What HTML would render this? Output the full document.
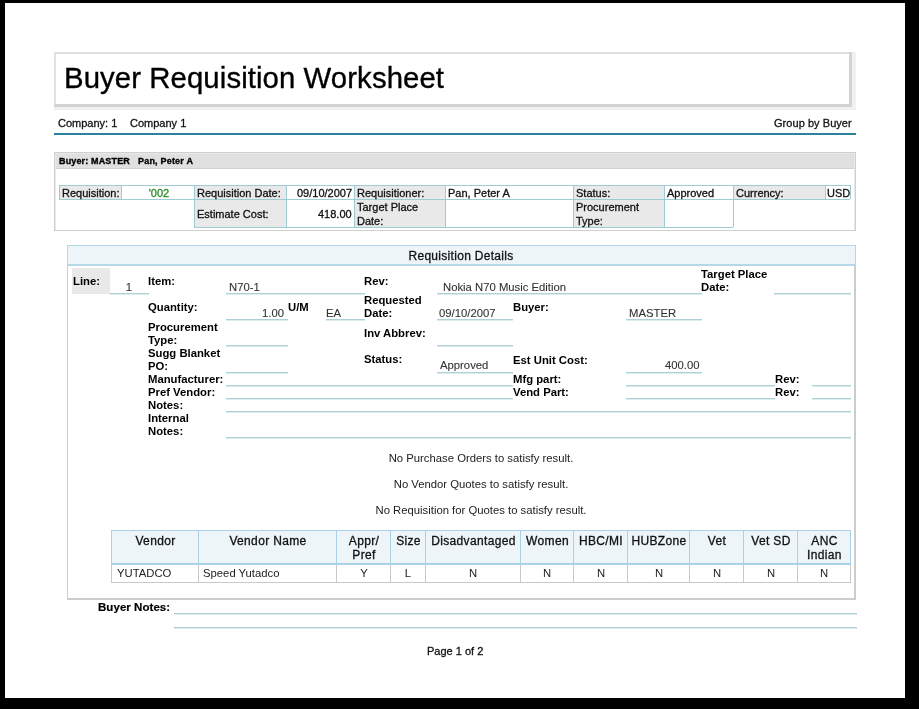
<!DOCTYPE html>
<html><head><meta charset="utf-8"><title>Buyer Requisition Worksheet</title>
<style>
html,body{margin:0;padding:0;}
body{width:919px;height:709px;background:#000;position:relative;overflow:hidden;font-family:"Liberation Sans",sans-serif;}
body>div{position:absolute;}
.g{will-change:transform;}
</style></head><body>
<div style="left:5px;top:3px;width:900px;height:695px;background:#fff;"></div>
<div style="left:54px;top:52px;width:802px;height:58px;background:#f1f1f1;"></div>
<div style="left:54px;top:52px;width:798px;height:55px;background:#d3d3d3;"></div>
<div style="left:54px;top:52px;width:795px;height:52px;background:#e1e1e1;"></div>
<div style="left:56px;top:54px;width:793px;height:50px;background:#fff;"></div>
<div class="g" style="top:58px;font:normal 29.33px/40px 'Liberation Sans',sans-serif;color:#000;white-space:nowrap;letter-spacing:0.09px;-webkit-text-stroke:0.35px #000;left:64px;">Buyer Requisition Worksheet</div>
<div class="g" style="top:113px;font:normal 11px/20px 'Liberation Sans',sans-serif;color:#111;white-space:nowrap;-webkit-text-stroke:0.3px #111;left:58px;">Company: 1</div>
<div class="g" style="top:113px;font:normal 11px/20px 'Liberation Sans',sans-serif;color:#111;white-space:nowrap;-webkit-text-stroke:0.3px #111;left:129.5px;">Company 1</div>
<div class="g" style="top:113px;font:normal 11px/20px 'Liberation Sans',sans-serif;color:#111;white-space:nowrap;letter-spacing:0.05px;-webkit-text-stroke:0.3px #111;right:67.5px;text-align:right;">Group by Buyer</div>
<div style="left:54px;top:133px;width:802px;height:2px;background:#2b819e;"></div>
<div style="left:54px;top:152px;width:802px;height:79px;background:#cfcfcf;"></div>
<div style="left:55px;top:153px;width:800px;height:77px;background:#e9e9e9;"></div>
<div style="left:56px;top:154px;width:798px;height:76px;background:#fff;"></div>
<div style="left:56px;top:154px;width:798px;height:15px;background:#e0e0e0;"></div>
<div style="left:56px;top:168px;width:798px;height:1px;background:#d2d2d2;"></div>
<div class="g" style="top:151px;font:bold 9px/20px 'Liberation Sans',sans-serif;color:#000;white-space:nowrap;letter-spacing:0.15px;-webkit-text-stroke:0.35px #000;left:59.3px;">Buyer: MASTER</div>
<div class="g" style="top:151px;font:bold 9px/20px 'Liberation Sans',sans-serif;color:#000;white-space:nowrap;letter-spacing:0.2px;-webkit-text-stroke:0.35px #000;left:137.5px;">Pan, Peter A</div>
<div style="left:59px;top:185px;width:62px;height:14px;background:#e9e9e9;"></div>
<div style="left:194px;top:185px;width:92px;height:14px;background:#e9e9e9;"></div>
<div style="left:354px;top:185px;width:91px;height:14px;background:#e9e9e9;"></div>
<div style="left:573px;top:185px;width:91px;height:14px;background:#e9e9e9;"></div>
<div style="left:733px;top:185px;width:92px;height:14px;background:#e9e9e9;"></div>
<div style="left:194px;top:199px;width:92px;height:28px;background:#e9e9e9;"></div>
<div style="left:354px;top:199px;width:91px;height:28px;background:#e9e9e9;"></div>
<div style="left:573px;top:199px;width:91px;height:28px;background:#e9e9e9;"></div>
<div style="left:59px;top:185px;width:791px;height:1px;background:#9fcbd5;"></div>
<div style="left:59px;top:199px;width:791px;height:1px;background:#9fcbd5;"></div>
<div style="left:194px;top:227px;width:539px;height:1px;background:#9fcbd5;"></div>
<div style="left:59px;top:185px;width:1px;height:14px;background:#9fcbd5;"></div>
<div style="left:121px;top:185px;width:1px;height:14px;background:#9fcbd5;"></div>
<div style="left:194px;top:185px;width:1px;height:14px;background:#9fcbd5;"></div>
<div style="left:286px;top:185px;width:1px;height:14px;background:#9fcbd5;"></div>
<div style="left:354px;top:185px;width:1px;height:14px;background:#9fcbd5;"></div>
<div style="left:445px;top:185px;width:1px;height:14px;background:#9fcbd5;"></div>
<div style="left:573px;top:185px;width:1px;height:14px;background:#9fcbd5;"></div>
<div style="left:664px;top:185px;width:1px;height:14px;background:#9fcbd5;"></div>
<div style="left:733px;top:185px;width:1px;height:14px;background:#9fcbd5;"></div>
<div style="left:825px;top:185px;width:1px;height:14px;background:#9fcbd5;"></div>
<div style="left:850px;top:185px;width:1px;height:14px;background:#9fcbd5;"></div>
<div style="left:194px;top:199px;width:1px;height:28px;background:#9fcbd5;"></div>
<div style="left:286px;top:199px;width:1px;height:28px;background:#9fcbd5;"></div>
<div style="left:354px;top:199px;width:1px;height:28px;background:#9fcbd5;"></div>
<div style="left:445px;top:199px;width:1px;height:28px;background:#9fcbd5;"></div>
<div style="left:573px;top:199px;width:1px;height:28px;background:#9fcbd5;"></div>
<div style="left:664px;top:199px;width:1px;height:28px;background:#9fcbd5;"></div>
<div style="left:733px;top:199px;width:1px;height:28px;background:#9fcbd5;"></div>
<div class="g" style="top:183px;font:normal 11px/20px 'Liberation Sans',sans-serif;color:#111;white-space:nowrap;-webkit-text-stroke:0.3px #111;left:62px;">Requisition:</div>
<div class="g" style="top:183px;font:normal 11px/20px 'Liberation Sans',sans-serif;color:#2b8c2b;white-space:nowrap;-webkit-text-stroke:0.3px #2b8c2b;left:123.5px;width:70px;text-align:center;">'002</div>
<div class="g" style="top:183px;font:normal 11px/20px 'Liberation Sans',sans-serif;color:#111;white-space:nowrap;-webkit-text-stroke:0.3px #111;left:196.5px;">Requisition Date:</div>
<div class="g" style="top:183px;font:normal 11px/20px 'Liberation Sans',sans-serif;color:#111;white-space:nowrap;-webkit-text-stroke:0.3px #111;right:567px;text-align:right;">09/10/2007</div>
<div class="g" style="top:183px;font:normal 11px/20px 'Liberation Sans',sans-serif;color:#111;white-space:nowrap;-webkit-text-stroke:0.3px #111;left:356.5px;">Requisitioner:</div>
<div class="g" style="top:183px;font:normal 11px/20px 'Liberation Sans',sans-serif;color:#111;white-space:nowrap;-webkit-text-stroke:0.3px #111;left:447.5px;">Pan, Peter A</div>
<div class="g" style="top:183px;font:normal 11px/20px 'Liberation Sans',sans-serif;color:#111;white-space:nowrap;-webkit-text-stroke:0.3px #111;left:575.5px;">Status:</div>
<div class="g" style="top:183px;font:normal 11px/20px 'Liberation Sans',sans-serif;color:#111;white-space:nowrap;-webkit-text-stroke:0.3px #111;left:666.5px;">Approved</div>
<div class="g" style="top:183px;font:normal 11px/20px 'Liberation Sans',sans-serif;color:#111;white-space:nowrap;-webkit-text-stroke:0.3px #111;left:735.5px;">Currency:</div>
<div class="g" style="top:183px;font:normal 11px/20px 'Liberation Sans',sans-serif;color:#111;white-space:nowrap;-webkit-text-stroke:0.3px #111;right:68.5px;text-align:right;">USD</div>
<div class="g" style="top:203.5px;font:normal 11px/20px 'Liberation Sans',sans-serif;color:#111;white-space:nowrap;-webkit-text-stroke:0.3px #111;left:196.5px;">Estimate Cost:</div>
<div class="g" style="top:203.5px;font:normal 11px/20px 'Liberation Sans',sans-serif;color:#111;white-space:nowrap;-webkit-text-stroke:0.3px #111;right:567px;text-align:right;">418.00</div>
<div class="g" style="top:197px;font:normal 11px/20px 'Liberation Sans',sans-serif;color:#111;white-space:nowrap;-webkit-text-stroke:0.3px #111;left:356.5px;">Target Place</div>
<div class="g" style="top:211px;font:normal 11px/20px 'Liberation Sans',sans-serif;color:#111;white-space:nowrap;-webkit-text-stroke:0.3px #111;left:356.5px;">Date:</div>
<div class="g" style="top:197px;font:normal 11px/20px 'Liberation Sans',sans-serif;color:#111;white-space:nowrap;-webkit-text-stroke:0.3px #111;left:575.5px;">Procurement</div>
<div class="g" style="top:211px;font:normal 11px/20px 'Liberation Sans',sans-serif;color:#111;white-space:nowrap;-webkit-text-stroke:0.3px #111;left:575.5px;">Type:</div>
<div style="left:67px;top:245px;width:789px;height:355px;background:#cdcdcd;"></div>
<div style="left:68px;top:246px;width:786px;height:352px;background:#fff;"></div>
<div style="left:67px;top:245px;width:789px;height:21px;background:#b5d7e8;"></div>
<div style="left:68px;top:246px;width:787px;height:18px;background:#edf5f9;"></div>
<div class="g" style="top:246px;font:normal 12px/20px 'Liberation Sans',sans-serif;color:#111;white-space:nowrap;letter-spacing:0.3px;-webkit-text-stroke:0.3px #111;left:311.0px;width:300px;text-align:center;">Requisition Details</div>
<div style="left:72px;top:268px;width:38px;height:26px;background:#e9e9e9;"></div>
<div class="g" style="top:271px;font:bold 11.3px/20px 'Liberation Sans',sans-serif;color:#000;white-space:nowrap;left:72.8px;">Line:</div>
<div class="g" style="top:277px;font:normal 11.3px/20px 'Liberation Sans',sans-serif;color:#333;white-space:nowrap;-webkit-text-stroke:0.1px #333;left:114.0px;width:30px;text-align:center;">1</div>
<div style="left:110px;top:293px;width:39px;height:1px;background:#aed1d6;"></div>
<div style="left:110px;top:294px;width:39px;height:1px;background:#dcecee;"></div>
<div class="g" style="top:271px;font:bold 11.3px/20px 'Liberation Sans',sans-serif;color:#000;white-space:nowrap;left:148px;">Item:</div>
<div class="g" style="top:277px;font:normal 11.3px/20px 'Liberation Sans',sans-serif;color:#333;white-space:nowrap;-webkit-text-stroke:0.1px #333;left:229px;">N70-1</div>
<div style="left:226px;top:293px;width:139px;height:1px;background:#aed1d6;"></div>
<div style="left:226px;top:294px;width:139px;height:1px;background:#dcecee;"></div>
<div class="g" style="top:271px;font:bold 11.3px/20px 'Liberation Sans',sans-serif;color:#000;white-space:nowrap;left:363.5px;">Rev:</div>
<div class="g" style="top:277px;font:normal 11.3px/20px 'Liberation Sans',sans-serif;color:#333;white-space:nowrap;-webkit-text-stroke:0.1px #333;left:443px;">Nokia N70 Music Edition</div>
<div style="left:437px;top:293px;width:265px;height:1px;background:#aed1d6;"></div>
<div style="left:437px;top:294px;width:265px;height:1px;background:#dcecee;"></div>
<div class="g" style="top:263.5px;font:bold 11.3px/20px 'Liberation Sans',sans-serif;color:#000;white-space:nowrap;left:701px;">Target Place</div>
<div class="g" style="top:276.5px;font:bold 11.3px/20px 'Liberation Sans',sans-serif;color:#000;white-space:nowrap;left:701px;">Date:</div>
<div style="left:774px;top:293px;width:77px;height:1px;background:#aed1d6;"></div>
<div style="left:774px;top:294px;width:77px;height:1px;background:#dcecee;"></div>
<div class="g" style="top:297px;font:bold 11.3px/20px 'Liberation Sans',sans-serif;color:#000;white-space:nowrap;left:148px;">Quantity:</div>
<div class="g" style="top:303px;font:normal 11.3px/20px 'Liberation Sans',sans-serif;color:#333;white-space:nowrap;-webkit-text-stroke:0.1px #333;right:635.5px;text-align:right;">1.00</div>
<div style="left:226px;top:319px;width:62px;height:1px;background:#aed1d6;"></div>
<div style="left:226px;top:320px;width:62px;height:1px;background:#dcecee;"></div>
<div class="g" style="top:297px;font:bold 11.3px/20px 'Liberation Sans',sans-serif;color:#000;white-space:nowrap;left:288px;">U/M</div>
<div class="g" style="top:303px;font:normal 11.3px/20px 'Liberation Sans',sans-serif;color:#333;white-space:nowrap;-webkit-text-stroke:0.1px #333;left:325.5px;">EA</div>
<div style="left:326px;top:319px;width:39px;height:1px;background:#aed1d6;"></div>
<div style="left:326px;top:320px;width:39px;height:1px;background:#dcecee;"></div>
<div class="g" style="top:290px;font:bold 11.3px/20px 'Liberation Sans',sans-serif;color:#000;white-space:nowrap;left:363.5px;">Requested</div>
<div class="g" style="top:303px;font:bold 11.3px/20px 'Liberation Sans',sans-serif;color:#000;white-space:nowrap;left:363.5px;">Date:</div>
<div class="g" style="top:303px;font:normal 11.3px/20px 'Liberation Sans',sans-serif;color:#333;white-space:nowrap;-webkit-text-stroke:0.1px #333;left:439px;">09/10/2007</div>
<div style="left:437px;top:319px;width:76px;height:1px;background:#aed1d6;"></div>
<div style="left:437px;top:320px;width:76px;height:1px;background:#dcecee;"></div>
<div class="g" style="top:296.5px;font:bold 11.3px/20px 'Liberation Sans',sans-serif;color:#000;white-space:nowrap;left:513px;">Buyer:</div>
<div class="g" style="top:303px;font:normal 11.3px/20px 'Liberation Sans',sans-serif;color:#333;white-space:nowrap;-webkit-text-stroke:0.1px #333;left:628.5px;">MASTER</div>
<div style="left:626px;top:319px;width:76px;height:1px;background:#aed1d6;"></div>
<div style="left:626px;top:320px;width:76px;height:1px;background:#dcecee;"></div>
<div class="g" style="top:316.5px;font:bold 11.3px/20px 'Liberation Sans',sans-serif;color:#000;white-space:nowrap;left:148px;">Procurement</div>
<div class="g" style="top:329.5px;font:bold 11.3px/20px 'Liberation Sans',sans-serif;color:#000;white-space:nowrap;left:148px;">Type:</div>
<div style="left:226px;top:345px;width:62px;height:1px;background:#aed1d6;"></div>
<div style="left:226px;top:346px;width:62px;height:1px;background:#dcecee;"></div>
<div class="g" style="top:323px;font:bold 11.3px/20px 'Liberation Sans',sans-serif;color:#000;white-space:nowrap;left:363.5px;">Inv Abbrev:</div>
<div style="left:437px;top:345px;width:76px;height:1px;background:#aed1d6;"></div>
<div style="left:437px;top:346px;width:76px;height:1px;background:#dcecee;"></div>
<div class="g" style="top:342.5px;font:bold 11.3px/20px 'Liberation Sans',sans-serif;color:#000;white-space:nowrap;left:148px;">Sugg Blanket</div>
<div class="g" style="top:355.5px;font:bold 11.3px/20px 'Liberation Sans',sans-serif;color:#000;white-space:nowrap;left:148px;">PO:</div>
<div style="left:226px;top:372px;width:62px;height:1px;background:#aed1d6;"></div>
<div style="left:226px;top:373px;width:62px;height:1px;background:#dcecee;"></div>
<div class="g" style="top:349px;font:bold 11.3px/20px 'Liberation Sans',sans-serif;color:#000;white-space:nowrap;left:363.5px;">Status:</div>
<div class="g" style="top:355px;font:normal 11.3px/20px 'Liberation Sans',sans-serif;color:#333;white-space:nowrap;-webkit-text-stroke:0.1px #333;left:439.5px;">Approved</div>
<div style="left:437px;top:372px;width:76px;height:1px;background:#aed1d6;"></div>
<div style="left:437px;top:373px;width:76px;height:1px;background:#dcecee;"></div>
<div class="g" style="top:349.5px;font:bold 11.3px/20px 'Liberation Sans',sans-serif;color:#000;white-space:nowrap;left:513px;">Est Unit Cost:</div>
<div class="g" style="top:355px;font:normal 11.3px/20px 'Liberation Sans',sans-serif;color:#333;white-space:nowrap;-webkit-text-stroke:0.1px #333;right:219.5px;text-align:right;">400.00</div>
<div style="left:626px;top:372px;width:76px;height:1px;background:#aed1d6;"></div>
<div style="left:626px;top:373px;width:76px;height:1px;background:#dcecee;"></div>
<div class="g" style="top:368.5px;font:bold 11.3px/20px 'Liberation Sans',sans-serif;color:#000;white-space:nowrap;left:148px;">Manufacturer:</div>
<div style="left:226px;top:385px;width:287px;height:1px;background:#aed1d6;"></div>
<div style="left:226px;top:386px;width:287px;height:1px;background:#dcecee;"></div>
<div class="g" style="top:368.5px;font:bold 11.3px/20px 'Liberation Sans',sans-serif;color:#000;white-space:nowrap;left:513px;">Mfg part:</div>
<div style="left:626px;top:385px;width:149px;height:1px;background:#aed1d6;"></div>
<div style="left:626px;top:386px;width:149px;height:1px;background:#dcecee;"></div>
<div class="g" style="top:368.5px;font:bold 11.3px/20px 'Liberation Sans',sans-serif;color:#000;white-space:nowrap;left:775px;">Rev:</div>
<div style="left:812px;top:385px;width:39px;height:1px;background:#aed1d6;"></div>
<div style="left:812px;top:386px;width:39px;height:1px;background:#dcecee;"></div>
<div class="g" style="top:382px;font:bold 11.3px/20px 'Liberation Sans',sans-serif;color:#000;white-space:nowrap;left:148px;">Pref Vendor:</div>
<div style="left:226px;top:398px;width:287px;height:1px;background:#aed1d6;"></div>
<div style="left:226px;top:399px;width:287px;height:1px;background:#dcecee;"></div>
<div class="g" style="top:382px;font:bold 11.3px/20px 'Liberation Sans',sans-serif;color:#000;white-space:nowrap;left:513px;">Vend Part:</div>
<div style="left:626px;top:398px;width:149px;height:1px;background:#aed1d6;"></div>
<div style="left:626px;top:399px;width:149px;height:1px;background:#dcecee;"></div>
<div class="g" style="top:382px;font:bold 11.3px/20px 'Liberation Sans',sans-serif;color:#000;white-space:nowrap;left:775px;">Rev:</div>
<div style="left:812px;top:398px;width:39px;height:1px;background:#aed1d6;"></div>
<div style="left:812px;top:399px;width:39px;height:1px;background:#dcecee;"></div>
<div class="g" style="top:395px;font:bold 11.3px/20px 'Liberation Sans',sans-serif;color:#000;white-space:nowrap;left:148px;">Notes:</div>
<div style="left:226px;top:411px;width:625px;height:1px;background:#aed1d6;"></div>
<div style="left:226px;top:412px;width:625px;height:1px;background:#dcecee;"></div>
<div class="g" style="top:408px;font:bold 11.3px/20px 'Liberation Sans',sans-serif;color:#000;white-space:nowrap;left:148px;">Internal</div>
<div class="g" style="top:421px;font:bold 11.3px/20px 'Liberation Sans',sans-serif;color:#000;white-space:nowrap;left:148px;">Notes:</div>
<div style="left:226px;top:437px;width:625px;height:1px;background:#aed1d6;"></div>
<div style="left:226px;top:438px;width:625px;height:1px;background:#dcecee;"></div>
<div class="g" style="top:448px;font:normal 11.3px/20px 'Liberation Sans',sans-serif;color:#222;white-space:nowrap;left:280.5px;width:400px;text-align:center;">No Purchase Orders to satisfy result.</div>
<div class="g" style="top:473.5px;font:normal 11.3px/20px 'Liberation Sans',sans-serif;color:#222;white-space:nowrap;left:280.5px;width:400px;text-align:center;">No Vendor Quotes to satisfy result.</div>
<div class="g" style="top:499.5px;font:normal 11.3px/20px 'Liberation Sans',sans-serif;color:#222;white-space:nowrap;left:280.5px;width:400px;text-align:center;">No Requisition for Quotes to satisfy result.</div>
<div style="left:111px;top:530px;width:740px;height:34px;background:#a9d2e8;"></div>
<div style="left:112px;top:531px;width:738px;height:32px;background:#eef5f9;"></div>
<div style="left:111px;top:530px;width:1px;height:34px;background:#a9d2e8;"></div>
<div style="left:198px;top:530px;width:1px;height:34px;background:#a9d2e8;"></div>
<div style="left:336px;top:530px;width:1px;height:34px;background:#a9d2e8;"></div>
<div style="left:390px;top:530px;width:1px;height:34px;background:#a9d2e8;"></div>
<div style="left:425px;top:530px;width:1px;height:34px;background:#a9d2e8;"></div>
<div style="left:520px;top:530px;width:1px;height:34px;background:#a9d2e8;"></div>
<div style="left:573px;top:530px;width:1px;height:34px;background:#a9d2e8;"></div>
<div style="left:627px;top:530px;width:1px;height:34px;background:#a9d2e8;"></div>
<div style="left:689px;top:530px;width:1px;height:34px;background:#a9d2e8;"></div>
<div style="left:743px;top:530px;width:1px;height:34px;background:#a9d2e8;"></div>
<div style="left:797px;top:530px;width:1px;height:34px;background:#a9d2e8;"></div>
<div style="left:850px;top:530px;width:1px;height:34px;background:#a9d2e8;"></div>
<div style="left:111px;top:563px;width:740px;height:2px;background:#a9d2e8;"></div>
<div style="left:111px;top:582px;width:740px;height:1px;background:#c9c9c9;"></div>
<div style="left:111px;top:565px;width:1px;height:18px;background:#c9c9c9;"></div>
<div style="left:198px;top:565px;width:1px;height:18px;background:#c9c9c9;"></div>
<div style="left:336px;top:565px;width:1px;height:18px;background:#c9c9c9;"></div>
<div style="left:390px;top:565px;width:1px;height:18px;background:#c9c9c9;"></div>
<div style="left:425px;top:565px;width:1px;height:18px;background:#c9c9c9;"></div>
<div style="left:520px;top:565px;width:1px;height:18px;background:#c9c9c9;"></div>
<div style="left:573px;top:565px;width:1px;height:18px;background:#c9c9c9;"></div>
<div style="left:627px;top:565px;width:1px;height:18px;background:#c9c9c9;"></div>
<div style="left:689px;top:565px;width:1px;height:18px;background:#c9c9c9;"></div>
<div style="left:743px;top:565px;width:1px;height:18px;background:#c9c9c9;"></div>
<div style="left:797px;top:565px;width:1px;height:18px;background:#c9c9c9;"></div>
<div style="left:850px;top:565px;width:1px;height:18px;background:#c9c9c9;"></div>
<div class="g" style="top:531px;font:normal 12px/20px 'Liberation Sans',sans-serif;color:#111;white-space:nowrap;letter-spacing:0.35px;-webkit-text-stroke:0.3px #111;left:101.5px;width:107px;text-align:center;">Vendor</div>
<div class="g" style="top:531px;font:normal 12px/20px 'Liberation Sans',sans-serif;color:#111;white-space:nowrap;letter-spacing:0.35px;-webkit-text-stroke:0.3px #111;left:188.5px;width:158px;text-align:center;">Vendor Name</div>
<div class="g" style="top:531px;font:normal 12px/20px 'Liberation Sans',sans-serif;color:#111;white-space:nowrap;letter-spacing:0.35px;-webkit-text-stroke:0.3px #111;left:326.5px;width:74px;text-align:center;">Appr/</div>
<div class="g" style="top:544.5px;font:normal 12px/20px 'Liberation Sans',sans-serif;color:#111;white-space:nowrap;letter-spacing:0.35px;-webkit-text-stroke:0.3px #111;left:326.5px;width:74px;text-align:center;">Pref</div>
<div class="g" style="top:531px;font:normal 12px/20px 'Liberation Sans',sans-serif;color:#111;white-space:nowrap;letter-spacing:0.35px;-webkit-text-stroke:0.3px #111;left:380.5px;width:55px;text-align:center;">Size</div>
<div class="g" style="top:531px;font:normal 12px/20px 'Liberation Sans',sans-serif;color:#111;white-space:nowrap;letter-spacing:0.35px;-webkit-text-stroke:0.3px #111;left:415.5px;width:115px;text-align:center;">Disadvantaged</div>
<div class="g" style="top:531px;font:normal 12px/20px 'Liberation Sans',sans-serif;color:#111;white-space:nowrap;letter-spacing:0.35px;-webkit-text-stroke:0.3px #111;left:510.5px;width:73px;text-align:center;">Women</div>
<div class="g" style="top:531px;font:normal 12px/20px 'Liberation Sans',sans-serif;color:#111;white-space:nowrap;letter-spacing:0.35px;-webkit-text-stroke:0.3px #111;left:563.5px;width:74px;text-align:center;">HBC/MI</div>
<div class="g" style="top:531px;font:normal 12px/20px 'Liberation Sans',sans-serif;color:#111;white-space:nowrap;letter-spacing:0.35px;-webkit-text-stroke:0.3px #111;left:617.5px;width:82px;text-align:center;">HUBZone</div>
<div class="g" style="top:531px;font:normal 12px/20px 'Liberation Sans',sans-serif;color:#111;white-space:nowrap;letter-spacing:0.35px;-webkit-text-stroke:0.3px #111;left:679.5px;width:74px;text-align:center;">Vet</div>
<div class="g" style="top:531px;font:normal 12px/20px 'Liberation Sans',sans-serif;color:#111;white-space:nowrap;letter-spacing:0.35px;-webkit-text-stroke:0.3px #111;left:733.5px;width:74px;text-align:center;">Vet SD</div>
<div class="g" style="top:531px;font:normal 12px/20px 'Liberation Sans',sans-serif;color:#111;white-space:nowrap;letter-spacing:0.35px;-webkit-text-stroke:0.3px #111;left:787.5px;width:73px;text-align:center;">ANC</div>
<div class="g" style="top:544.5px;font:normal 12px/20px 'Liberation Sans',sans-serif;color:#111;white-space:nowrap;letter-spacing:0.35px;-webkit-text-stroke:0.3px #111;left:787.5px;width:73px;text-align:center;">Indian</div>
<div class="g" style="top:562.5px;font:normal 11.3px/20px 'Liberation Sans',sans-serif;color:#222;white-space:nowrap;left:116.5px;">YUTADCO</div>
<div class="g" style="top:562.5px;font:normal 11.3px/20px 'Liberation Sans',sans-serif;color:#222;white-space:nowrap;left:202.5px;">Speed Yutadco</div>
<div class="g" style="top:562.5px;font:normal 11.3px/20px 'Liberation Sans',sans-serif;color:#222;white-space:nowrap;left:323.5px;width:80px;text-align:center;">Y</div>
<div class="g" style="top:562.5px;font:normal 11.3px/20px 'Liberation Sans',sans-serif;color:#222;white-space:nowrap;left:368.0px;width:80px;text-align:center;">L</div>
<div class="g" style="top:562.5px;font:normal 11.3px/20px 'Liberation Sans',sans-serif;color:#222;white-space:nowrap;left:433.0px;width:80px;text-align:center;">N</div>
<div class="g" style="top:562.5px;font:normal 11.3px/20px 'Liberation Sans',sans-serif;color:#222;white-space:nowrap;left:507.0px;width:80px;text-align:center;">N</div>
<div class="g" style="top:562.5px;font:normal 11.3px/20px 'Liberation Sans',sans-serif;color:#222;white-space:nowrap;left:560.5px;width:80px;text-align:center;">N</div>
<div class="g" style="top:562.5px;font:normal 11.3px/20px 'Liberation Sans',sans-serif;color:#222;white-space:nowrap;left:618.5px;width:80px;text-align:center;">N</div>
<div class="g" style="top:562.5px;font:normal 11.3px/20px 'Liberation Sans',sans-serif;color:#222;white-space:nowrap;left:676.5px;width:80px;text-align:center;">N</div>
<div class="g" style="top:562.5px;font:normal 11.3px/20px 'Liberation Sans',sans-serif;color:#222;white-space:nowrap;left:730.5px;width:80px;text-align:center;">N</div>
<div class="g" style="top:562.5px;font:normal 11.3px/20px 'Liberation Sans',sans-serif;color:#222;white-space:nowrap;left:784.0px;width:80px;text-align:center;">N</div>
<div class="g" style="top:597px;font:bold 11.5px/20px 'Liberation Sans',sans-serif;color:#000;white-space:nowrap;letter-spacing:0.05px;-webkit-text-stroke:0.2px #000;left:97.5px;">Buyer Notes:</div>
<div style="left:174px;top:613px;width:683px;height:1px;background:#aed1d6;"></div>
<div style="left:174px;top:614px;width:683px;height:1px;background:#dcecee;"></div>
<div style="left:174px;top:627px;width:683px;height:1px;background:#aed1d6;"></div>
<div style="left:174px;top:628px;width:683px;height:1px;background:#dcecee;"></div>
<div class="g" style="top:640.5px;font:normal 11px/20px 'Liberation Sans',sans-serif;color:#111;white-space:nowrap;-webkit-text-stroke:0.3px #111;left:426.5px;">Page 1 of 2</div>
</body></html>
